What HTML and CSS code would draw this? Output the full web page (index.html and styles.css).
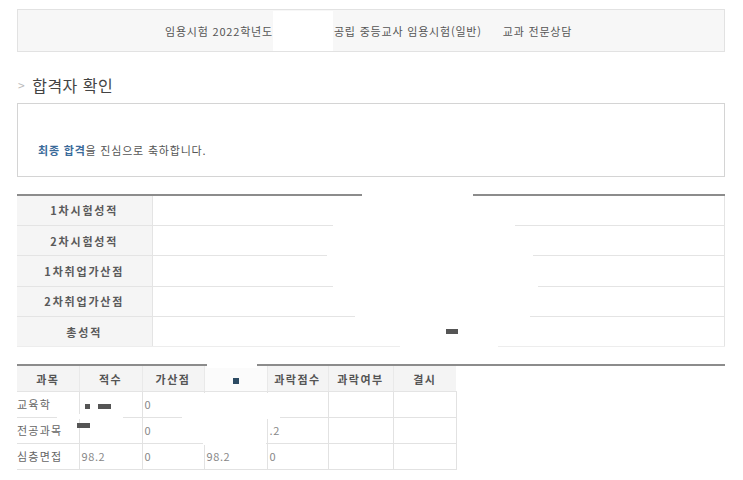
FILE: index.html
```html
<!DOCTYPE html>
<html lang="ko">
<head>
<meta charset="utf-8">
<title>합격자 확인</title>
<link rel="stylesheet" href="styles.css">
</head>
<body>
<div class="page">
  <div class="exam-bar">
    <span>임용시험 2022학년도</span>
    <span class="blank"></span>
    <span>공립 중등교사 임용시험(일반)</span>
    <span class="subject">교과 전문상담</span>
  </div>

  <h2 class="title"><span class="chev">&gt;</span>합격자 확인</h2>

  <div class="message">
    <p><strong>최종 합격</strong>을 진심으로 축하합니다.</p>
  </div>

  <table class="scores">
    <tr><th>1차시험성적</th><td></td></tr>
    <tr><th>2차시험성적</th><td></td></tr>
    <tr><th>1차취업가산점</th><td></td></tr>
    <tr><th>2차취업가산점</th><td></td></tr>
    <tr><th>총성적</th><td></td></tr>
  </table>

  <div class="detail-wrap">
    <table class="detail">
      <colgroup>
        <col class="c1"><col class="c2"><col class="c3"><col class="c4"><col class="c5"><col class="c6"><col class="c7">
      </colgroup>
      <tr>
        <th>과목</th><th>적수</th><th>가산점</th><th class="hidden-col"><span class="navy-mark"></span></th><th>과락점수</th><th>과락여부</th><th>결시</th>
      </tr>
      <tr>
        <td class="name">교육학</td><td><span class="mark sq"></span><span class="mark bar"></span></td><td>0</td><td></td><td></td><td></td><td></td>
      </tr>
      <tr>
        <td class="name">전공과목</td><td></td><td>0</td><td></td><td>.2</td><td></td><td></td>
      </tr>
      <tr>
        <td class="name">심층면접</td><td>98.2</td><td>0</td><td>98.2</td><td>0</td><td></td><td></td>
      </tr>
    </table>
  </div>

  <div class="redact p1"></div>
  <div class="redact p2"></div>
  <div class="redact p3"></div>
  <div class="redact p4"></div>
  <div class="redact p5"></div>
  <div class="redact p6"></div>
  <div class="redact p7"></div>
  <div class="redact p8"></div>
  <div class="redact p9"></div>
  <div class="redact q1"></div>
  <div class="redact q2"></div>
  <div class="redact q3"></div>
  <div class="redact q4"></div>
  <div class="redact q5"></div>
  <div class="dark m1"></div>
  <div class="dark m2"></div>
</div>
</body>
</html>
```

FILE: styles.css
```css
* { box-sizing: border-box; }

body {
  margin: 0;
  background: #fff;
  font-family: "Noto Sans CJK KR", "Noto Sans", "Liberation Sans", sans-serif;
  font-size: 11px;
  color: #555;
}

.page {
  position: relative;
  width: 743px;
  padding: 9px 18px 0 17px;
}

/* top exam bar */
.exam-bar {
  height: 43px;
  border: 1px solid #e2e2e2;
  background: #f7f7f7;
  display: flex;
  align-items: center;
  justify-content: flex-start;
  padding-left: 147px;
  color: #555;
  font-size: 11px;
  line-height: 14px;
  letter-spacing: 0.8px;
}
.exam-bar .blank {
  width: 60px;
  height: 40px;
  background: #fff;
  margin: 0 1px 0 0;
}
.exam-bar .subject { margin-left: 21px; }

/* title */
.title {
  margin: 22px 0 0;
  height: 22px;
  font-size: 16px;
  line-height: 22px;
  font-weight: normal;
  color: #444;
  display: flex;
  align-items: center;
  letter-spacing: 0.5px;
}
.title .chev {
  color: #bbb;
  font-size: 12px;
  margin: 0 7px 0 1px;
}

/* message box */
.message {
  margin-top: 7px;
  height: 74px;
  border: 1px solid #d4d4d4;
  padding: 38px 20px 0;
}
.message p {
  margin: 0;
  font-size: 11px;
  line-height: 16px;
  color: #555;
  letter-spacing: 0.8px;
}
.message strong {
  color: #3b6b9a;
  font-weight: bold;
}

/* score table */
.scores {
  margin-top: 17px;
  width: 708px;
  border-collapse: collapse;
  border-top: 2px solid #8c8c8c;
}
.scores th, .scores td {
  height: 30.4px;
  border-bottom: 1px solid #e4e4e4;
  padding: 0;
}
.scores th {
  width: 135px;
  background: #f5f5f5;
  border-right: 1px solid #e4e4e4;
  font-weight: bold;
  color: #5a5a5a;
  letter-spacing: 1.8px;
  text-align: center;
  font-size: 11px;
}
.scores td { border-right: 1px solid #e4e4e4; }
.scores tr:last-child th, .scores tr:last-child td { border-bottom: 1px solid #ededed; }

/* detail table */
.detail-wrap {
  margin-top: 17px;
  border-top: 2px solid #8c8c8c;
}
.detail {
  width: 439px;
  border-collapse: collapse;
  table-layout: fixed;
}
.detail .c1 { width: 62px; }
.detail .c2 { width: 63px; }
.detail .c3 { width: 62px; }
.detail .c4 { width: 63px; }
.detail .c5 { width: 61px; }
.detail .c6 { width: 65px; }
.detail .c7 { width: 63px; }
.detail th {
  height: 25px;
  background: #f4f4f4;
  font-weight: bold;
  color: #555;
  letter-spacing: 1.5px;
  border-left: 1px solid #e9e9e9;
  border-bottom: 1px solid #e4e4e4;
  padding: 0;
  font-size: 11px;
}
.detail th:first-child { border-left: none; }
.detail th.hidden-col { background: #fbfbfb; }
.detail td {
  height: 26px;
  border-left: 1px solid #e2e2e2;
  border-bottom: 1px solid #e2e2e2;
  padding: 0 2px;
  color: #888;
  font-size: 11px;
  letter-spacing: 0.6px;
  white-space: nowrap;
}
.detail td:last-child { border-right: 1px solid #e2e2e2; }
.detail td.name {
  border-left: none;
  padding: 0;
  color: #666;
  letter-spacing: 1.2px;
}
.navy-mark {
  display: inline-block;
  width: 6px;
  height: 6px;
  background: #2d4b63;
  vertical-align: middle;
}
.mark {
  display: inline-block;
  height: 5px;
  background: #555;
  vertical-align: middle;
}
.mark.sq { width: 5px; margin-left: 3px; }
.mark.bar { width: 13px; margin-left: 8px; }

/* redaction overlays */
.redact { position: absolute; background: #fff; }
.p1 { left: 362px; top: 190px; width: 111px; height: 156px; }
.p2 { left: 333px; top: 222px; width: 29px; height: 70px; }
.p3 { left: 327px; top: 252px; width: 6px; height: 8px; }
.p4 { left: 355px; top: 313px; width: 7px; height: 8px; }
.p5 { left: 473px; top: 221px; width: 42px; height: 8px; }
.p6 { left: 473px; top: 252px; width: 60px; height: 8px; }
.p7 { left: 473px; top: 282px; width: 65px; height: 8px; }
.p8 { left: 473px; top: 313px; width: 57px; height: 8px; }
.p9 { left: 400px; top: 344px; width: 98px; height: 6px; }
.q1 { left: 207px; top: 363px; width: 50px; height: 5px; }
.q2 { left: 203px; top: 393px; width: 63px; height: 52px; }
.q3 { left: 266px; top: 393px; width: 3px; height: 24px; }
.q4 { left: 57px; top: 414px; width: 66px; height: 5px; }
.q5 { left: 182px; top: 414px; width: 98px; height: 5px; }

.dark { position: absolute; background: #555; }
.m1 { left: 446px; top: 329px; width: 12px; height: 5px; }
.m2 { left: 77px; top: 423px; width: 13px; height: 5px; }
```
